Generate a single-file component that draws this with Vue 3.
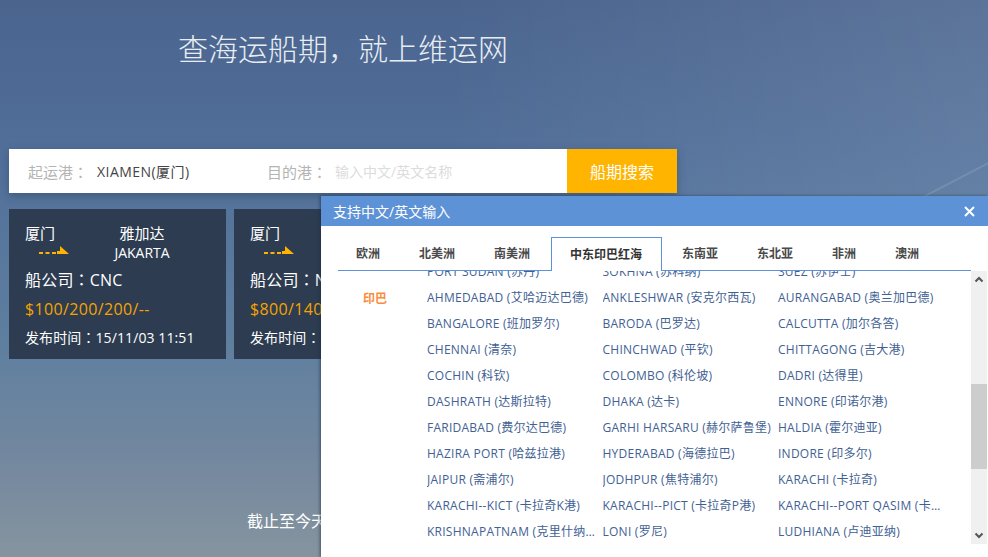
<script setup>
import { ref } from "vue";

const tabs = ["欧洲", "北美洲", "南美洲", "中东印巴红海", "东南亚", "东北亚", "非洲", "澳洲"];
const activeTab = ref("中东印巴红海");

const cards = [
  { from: "厦门", to: "雅加达", toEn: "JAKARTA", carrier: "CNC", price: "$100/200/200/--", time: "15/11/03 11:51" },
  { from: "厦门", to: "孟买", toEn: "MUMBAI", carrier: "NYK", price: "$800/1400/1400/--", time: "15/11/03 11:51" },
];

// last row of the previous region, scrolled half out of view
const previousPorts = ["PORT SUDAN (苏丹)", "SOKHNA (苏科纳)", "SUEZ (苏伊士)"];

const indiaPorts = [
  "AHMEDABAD (艾哈迈达巴德)", "ANKLESHWAR (安克尔西瓦)", "AURANGABAD (奥兰加巴德)",
  "BANGALORE (班加罗尔)", "BARODA (巴罗达)", "CALCUTTA (加尔各答)",
  "CHENNAI (清奈)", "CHINCHWAD (平钦)", "CHITTAGONG (吉大港)",
  "COCHIN (科钦)", "COLOMBO (科伦坡)", "DADRI (达得里)",
  "DASHRATH (达斯拉特)", "DHAKA (达卡)", "ENNORE (印诺尔港)",
  "FARIDABAD (费尔达巴德)", "GARHI HARSARU (赫尔萨鲁堡)", "HALDIA (霍尔迪亚)",
  "HAZIRA PORT (哈兹拉港)", "HYDERABAD (海德拉巴)", "INDORE (印多尔)",
  "JAIPUR (斋浦尔)", "JODHPUR (焦特浦尔)", "KARACHI (卡拉奇)",
  "KARACHI--KICT (卡拉奇K港)", "KARACHI--PICT (卡拉奇P港)", "KARACHI--PORT QASIM (卡西姆港)",
  "KRISHNAPATNAM (克里什纳帕特南)", "LONI (罗尼)", "LUDHIANA (卢迪亚纳)",
];
</script>

<template>
  <div class="page">
    <h1 class="title">查海运船期，就上维运网</h1>

    <div class="search">
      <div class="field field--from">
        <span class="field__label">起运港<span class="colon">：</span></span>
        <span class="field__value">XIAMEN(厦门)</span>
      </div>
      <div class="field">
        <span class="field__label">目的港<span class="colon">：</span></span>
        <span class="field__hint">输入中文/英文名称</span>
      </div>
      <button class="search__btn">船期搜索</button>
    </div>

    <div class="cards">
      <div v-for="(card, i) in cards" :key="i" class="card">
        <div class="route">
          <div class="route__from">
            <div>{{ card.from }}</div>
            <svg class="route__arrow" width="30" height="8" viewBox="0 0 30 8">
              <path d="M0 7H18" stroke="#ffb400" stroke-width="2" stroke-dasharray="4 2.5" fill="none" />
              <path d="M18 8V5H21V0L30 8Z" fill="#ffb400" />
            </svg>
          </div>
          <div class="route__to">
            <div>{{ card.to }}</div>
            <div class="route__en">{{ card.toEn }}</div>
          </div>
        </div>
        <div class="card__carrier">船公司<span class="colon">：</span>{{ card.carrier }}</div>
        <div class="card__price">{{ card.price }}</div>
        <div class="card__time">发布时间<span class="colon">：</span>{{ card.time }}</div>
      </div>
    </div>

    <p class="summary">截止至今天，共有船期信息</p>

    <div class="dialog">
      <div class="dialog__head">
        <span>支持中文/英文输入</span>
        <svg class="dialog__close" width="11" height="11" viewBox="0 0 11 11">
          <path d="M1 1L10 10M10 1L1 10" stroke="#fff" stroke-width="2" fill="none" />
        </svg>
      </div>
      <div class="tabs">
        <span
          v-for="tab in tabs"
          :key="tab"
          class="tab"
          :class="{ 'tab--active': tab === activeTab }"
          @click="activeTab = tab"
        >{{ tab }}</span>
      </div>
      <div class="dialog__body">
        <div class="ports">
          <div class="region region--prev">
            <div class="region__name"></div>
            <div class="region__grid">
              <span v-for="p in previousPorts" :key="p" class="port">{{ p }}</span>
            </div>
          </div>
          <div class="region">
            <div class="region__name">印巴</div>
            <div class="region__grid">
              <span v-for="p in indiaPorts" :key="p" class="port">{{ p }}</span>
            </div>
          </div>
        </div>
        <div class="scrollbar">
          <svg width="16" height="17" viewBox="0 0 16 17">
            <path d="M4.5 10.5L8 7L11.5 10.5" stroke="#555" stroke-width="2" fill="none" />
          </svg>
          <div class="scrollbar__track"><div class="scrollbar__thumb"></div></div>
          <svg width="16" height="17" viewBox="0 0 16 17">
            <path d="M4.5 6.5L8 10L11.5 6.5" stroke="#555" stroke-width="2" fill="none" />
          </svg>
        </div>
      </div>
    </div>
  </div>
</template>

<style>
html,
body {
  margin: 0;
  overflow: hidden;
}
</style>

<style scoped>
.page {
  position: relative;
  width: 988px;
  height: 557px;
  overflow: hidden;
  box-sizing: border-box;
  padding: 27px 0 0 9px;
  font-family: "Open Sans", "Noto Sans CJK SC", sans-serif;
  color: #fff;
  background:
    linear-gradient(152.5deg, transparent 86.1%, rgba(255, 255, 255, 0.14) 86.8%, transparent 87.5%) right top / 100px 196px no-repeat,
    linear-gradient(90deg, rgba(255, 255, 255, 0) 45%, rgba(255, 255, 255, 0.1) 100%),
    linear-gradient(180deg, #4a648e 0%, #52709a 30%, #5f7f9f 62%, #76899f 85%, #85949f 100%);
}

.colon {
  font-family: "Noto Sans CJK TC", sans-serif;
}

.title {
  margin: 0 0 0 169px;
  height: 122px;
  font-family: "Noto Sans CJK SC", sans-serif;
  font-size: 30px;
  font-weight: 300;
  line-height: 40px;
  color: #e8edf3;
}

.search {
  display: flex;
  width: 668px;
  height: 44px;
  background: #fff;
  box-shadow: 0 3px 8px rgba(30, 45, 70, 0.35);
}

.field {
  display: flex;
  align-items: center;
  flex: 1;
  white-space: nowrap;
}

.field--from {
  flex: 0 0 258px;
  padding-left: 19px;
  box-sizing: border-box;
}

.field__label {
  width: 68px;
  font-size: 15px;
  color: #b4b4b4;
}

.field--from .field__label {
  width: 69px;
}

.field__value {
  font-size: 14px;
  letter-spacing: 0.45px;
  color: #444;
}

.field__hint {
  font-size: 14px;
  color: #dcdcdc;
}

.search__btn {
  flex: 0 0 110px;
  border: 0;
  padding: 0;
  background: #ffb400;
  color: #fff;
  font-family: inherit;
  font-size: 16px;
}

.cards {
  display: flex;
  gap: 8px;
  margin-top: 16px;
}

.card {
  box-sizing: border-box;
  width: 217px;
  height: 150px;
  padding: 14px 0 0 16px;
  background: #2d3c51;
  font-size: 14px;
}

.route {
  display: flex;
  height: 41px;
  font-size: 15px;
}

.route__from {
  width: 60px;
  line-height: 20px;
}

.route__arrow {
  display: block;
  margin: 3px 0 0 14px;
}

.route__to {
  width: 114px;
  text-align: center;
  line-height: 20px;
}

.route__en {
  font-size: 14px;
}

.card__carrier {
  font-size: 16px;
  letter-spacing: 0.2px;
  line-height: 30px;
}

.card__price {
  font-size: 16px;
  letter-spacing: 0.35px;
  line-height: 28px;
  color: #f5a300;
}

.card__time {
  line-height: 28px;
  letter-spacing: 0.1px;
  white-space: nowrap;
}

.summary {
  margin: 150px 0 0 238px;
  font-size: 16px;
  line-height: 24px;
  white-space: nowrap;
}

.dialog {
  position: absolute;
  top: 196px;
  left: 321px;
  width: 667px;
  height: 361px;
  background: #fff;
  box-shadow: -1px 0 3px rgba(30, 40, 60, 0.6);
}

.dialog__head {
  display: flex;
  align-items: center;
  justify-content: space-between;
  height: 30px;
  padding: 0 13px 0 12px;
  background: #5e92d6;
  font-size: 14px;
}

.tabs {
  display: flex;
  box-sizing: border-box;
  height: 45px;
  margin: 0 17px;
  padding-top: 11px;
  border-bottom: 1px solid #5e92d6;
}

.tab {
  box-sizing: border-box;
  height: 34px;
  padding: 0 19.5px;
  font-family: "Noto Sans CJK SC", sans-serif;
  font-size: 12px;
  font-weight: 700;
  line-height: 32px;
  color: #4a4a4a;
  white-space: nowrap;
  cursor: pointer;
}

.tab:first-child {
  margin-left: -1.5px;
}

.tab--active {
  padding: 0 18.5px;
  margin: 0 1px;
  border: 1px solid #5e92d6;
  border-bottom: 0;
  background: #fff;
  color: #333;
}

.dialog__body {
  display: flex;
  height: 273px;
}

.ports {
  flex: 1;
  height: 273px;
  overflow: hidden;
}

.region {
  display: flex;
}

.region--prev {
  margin-top: -12px;
}

.region__name {
  flex: 0 0 106px;
  box-sizing: border-box;
  padding-right: 40px;
  text-align: right;
  font-family: "Noto Sans CJK SC", sans-serif;
  font-size: 12px;
  font-weight: 700;
  line-height: 26px;
  color: #fb8c3c;
}

.region__grid {
  display: grid;
  grid-template-columns: repeat(3, 175.5px);
  grid-auto-rows: 26px;
}

.port {
  max-width: 173px;
  overflow: hidden;
  font-size: 12px;
  letter-spacing: 0.25px;
  line-height: 26px;
  color: #3f6193;
  white-space: nowrap;
  text-overflow: ellipsis;
}

.scrollbar {
  display: flex;
  flex-direction: column;
  flex: 0 0 16px;
  height: 273px;
  margin-right: 1px;
  background: #f0f0f0;
}

.scrollbar svg {
  display: block;
  flex: none;
}

.scrollbar__track {
  flex: 1;
  padding-top: 96px;
}

.scrollbar__thumb {
  height: 85px;
  background: #cdcdcd;
}

.dialog__close {
  flex: none;
}
</style>
